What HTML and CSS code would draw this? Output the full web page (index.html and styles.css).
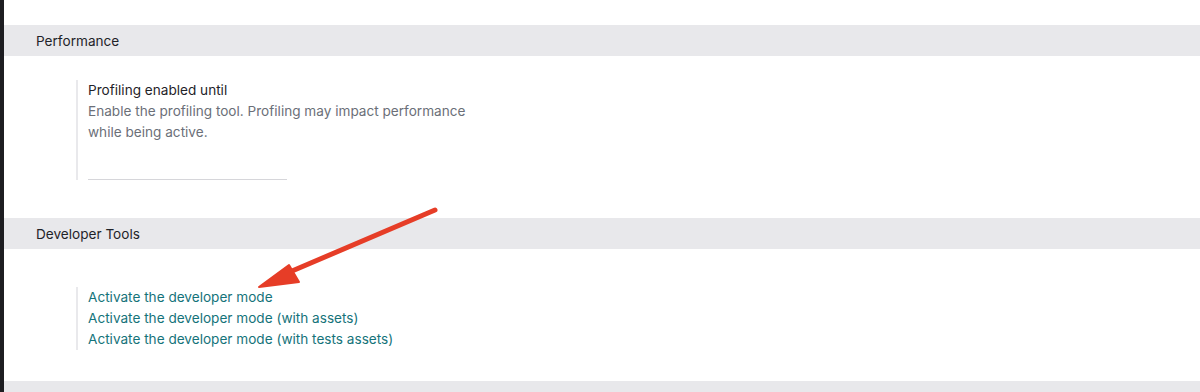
FILE: index.html
```html
<!DOCTYPE html>
<html lang="en">
<head>
  <meta charset="UTF-8" />
  <title>Settings</title>
  <link rel="stylesheet" href="styles.css">
</head>
<body>
  <div class="edge"></div>
  <div class="content">
    <div class="section-title">Performance</div>
    <div class="setting">
      <div class="setting-box">
        <div class="label">Profiling enabled until</div>
        <div class="help">Enable the profiling tool. Profiling may impact performance<br>while being active.</div>
        <div class="field"></div>
      </div>
    </div>

    <div class="section-title">Developer Tools</div>
    <div class="setting links">
      <div class="setting-box">
        <a href="#">Activate the developer mode</a>
        <a href="#">Activate the developer mode (with assets)</a>
        <a href="#">Activate the developer mode (with tests assets)</a>
      </div>
    </div>

    <div class="section-title">About</div>

    <svg class="arrow" width="1200" height="392" viewBox="0 0 1200 392">
      <line x1="435" y1="210" x2="285" y2="274" stroke="#e63d27" stroke-width="5" stroke-linecap="round" />
      <polygon points="259,287 289,265 299,282" fill="#e63d27" stroke="#e63d27" stroke-width="2" stroke-linejoin="round" />
    </svg>
  </div>
</body>
</html>
```

FILE: styles.css
```css
body {
  margin: 0;
  display: flex;
  height: 392px;
  overflow: hidden;
  background: #fff;
  font-family: Inter, Roboto, "Liberation Sans", sans-serif;
  font-size: 13.6px;
  color: #212529;
}

.edge {
  width: 4px;
  background: #1d1d21;
  flex-shrink: 0;
}

.content {
  flex: 1;
  padding-top: 25px;
}

.section-title {
  height: 31px;
  line-height: 33px;
  padding-left: 32px;
  background: #e8e8eb;
  color: #1f2329;
}

.setting {
  padding: 24px 0 32px 72px;
}

.setting.links {
  padding-top: 38px;
  padding-bottom: 31px;
}

.setting-box {
  border-left: 2px solid #e9e9ec;
  padding-left: 10px;
  line-height: 21px;
}

.label {
  color: #1f2329;
}

.help {
  color: #6b6f78;
}

.field {
  width: 199px;
  height: 36px;
  border-bottom: 1px solid #d6d6da;
  margin-bottom: 6px;
}

.setting-box a {
  display: block;
  color: #15737a;
  text-decoration: none;
}

.arrow {
  position: absolute;
  top: 0;
  left: 0;
  pointer-events: none;
}
```
